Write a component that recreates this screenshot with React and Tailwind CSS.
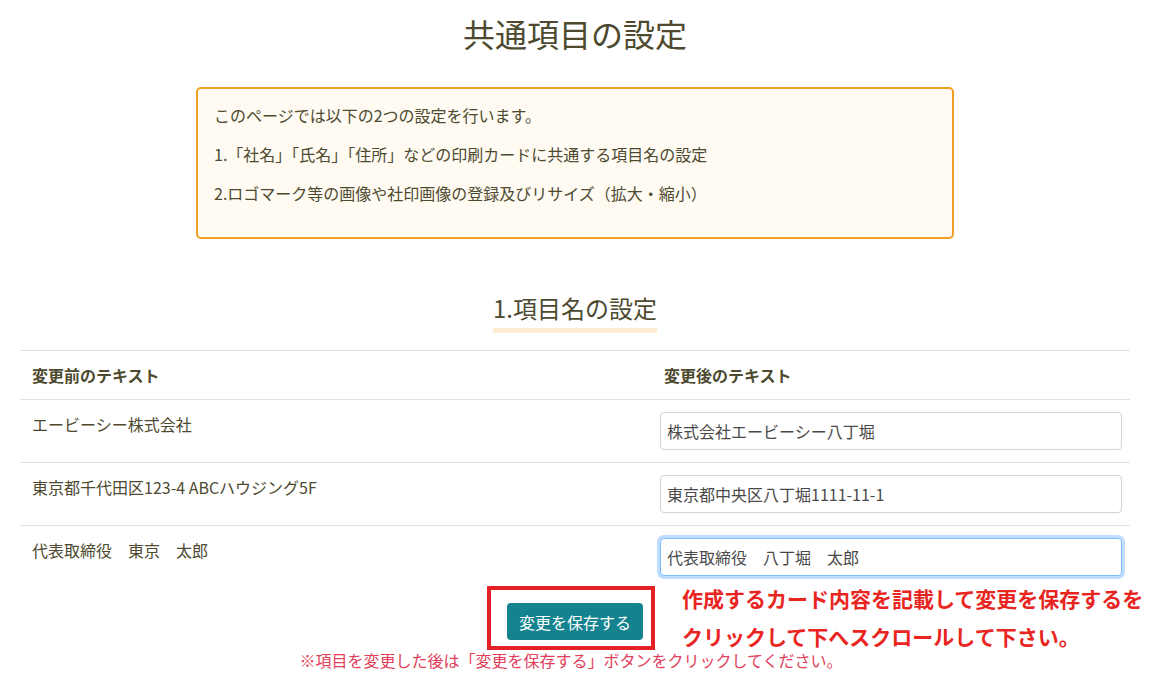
import { useState } from 'react'

const rows = [
  { before: 'エービーシー株式会社', after: '株式会社エービーシー八丁堀' },
  { before: '東京都千代田区123-4 ABCハウジング5F', after: '東京都中央区八丁堀1111-11-1' },
  { before: '代表取締役　東京　太郎', after: '代表取締役　八丁堀　太郎', focused: true },
]

export default function App() {
  const [values, setValues] = useState(rows.map(r => r.after))

  return (
    <div className="min-h-screen bg-white text-[#4d4a30] font-['Noto_Sans_CJK_JP','Noto_Sans',sans-serif]">
      <div className="ml-5 w-[1110px]">
        <h1 className="pt-[14px] text-center text-[32px] leading-[38px] font-normal">共通項目の設定</h1>

        <div className="mx-auto mt-[35px] w-[758px] rounded-[5px] border-2 border-[#f0a025] bg-[#fffaf2] px-4 pt-[15px] pb-4 text-[16px] leading-[23px]">
          <p className="mb-4">このページでは以下の2つの設定を行います。</p>
          <p className="mb-4">1.「社名」「氏名」「住所」などの印刷カードに共通する項目名の設定</p>
          <p className="mb-4">2.ロゴマーク等の画像や社印画像の登録及びリサイズ（拡大・縮小）</p>
        </div>

        <div className="mt-[54px] text-center">
          <h2 className="inline-block border-b-[5px] border-[#fdecd2] pb-[5px] text-[24px] leading-[30px] font-normal">1.項目名の設定</h2>
        </div>

        <table className="mt-[17px] w-full border-collapse text-[16px] leading-6">
          <thead>
            <tr className="border-t border-b border-[#dee2e6]">
              <th className="w-[632px] p-3 text-left font-bold">変更前のテキスト</th>
              <th className="p-3 text-left font-bold">変更後のテキスト</th>
            </tr>
          </thead>
          <tbody>
            {rows.map((row, i) => (
              <tr key={i} className={i < rows.length - 1 ? 'border-b border-[#dee2e6]' : ''}>
                <td className="px-3 pt-3 pb-[26px] align-top">{row.before}</td>
                <td className="px-2 py-3 align-top">
                  <input
                    value={values[i]}
                    onChange={e => setValues(v => v.map((x, j) => (j === i ? e.target.value : x)))}
                    className={`block h-[38px] w-full rounded bg-white px-[6px] text-[16px] text-[#4a4a4a] outline-none ${
                      row.focused
                        ? 'border border-[#80bdff] shadow-[0_0_0_3px_rgba(0,123,255,0.25)]'
                        : 'border border-[#ced4da]'
                    }`}
                  />
                </td>
              </tr>
            ))}
          </tbody>
        </table>

        <div className="mt-[15px] flex justify-center">
          <div className="relative">
            <button className="h-[37px] rounded bg-[#14838f] px-3 text-[16px] text-white">変更を保存する</button>
            <div className="pointer-events-none absolute -top-[17px] -left-[20px] h-[64px] w-[168px] border-4 border-[#e52127]"></div>
            <div className="absolute -top-[24px] left-[175px] w-[480px] text-[21px] leading-[38px] font-bold text-[#e8251f]">
              <p>作成するカード内容を記載して変更を保存するを</p>
              <p>クリックして下へスクロールして下さい。</p>
            </div>
          </div>
        </div>

        <p className="mt-[8px] pr-2 text-center text-[16px] leading-6 text-[#e2405a]">※項目を変更した後は「変更を保存する」ボタンをクリックしてください。</p>
      </div>
    </div>
  )
}
